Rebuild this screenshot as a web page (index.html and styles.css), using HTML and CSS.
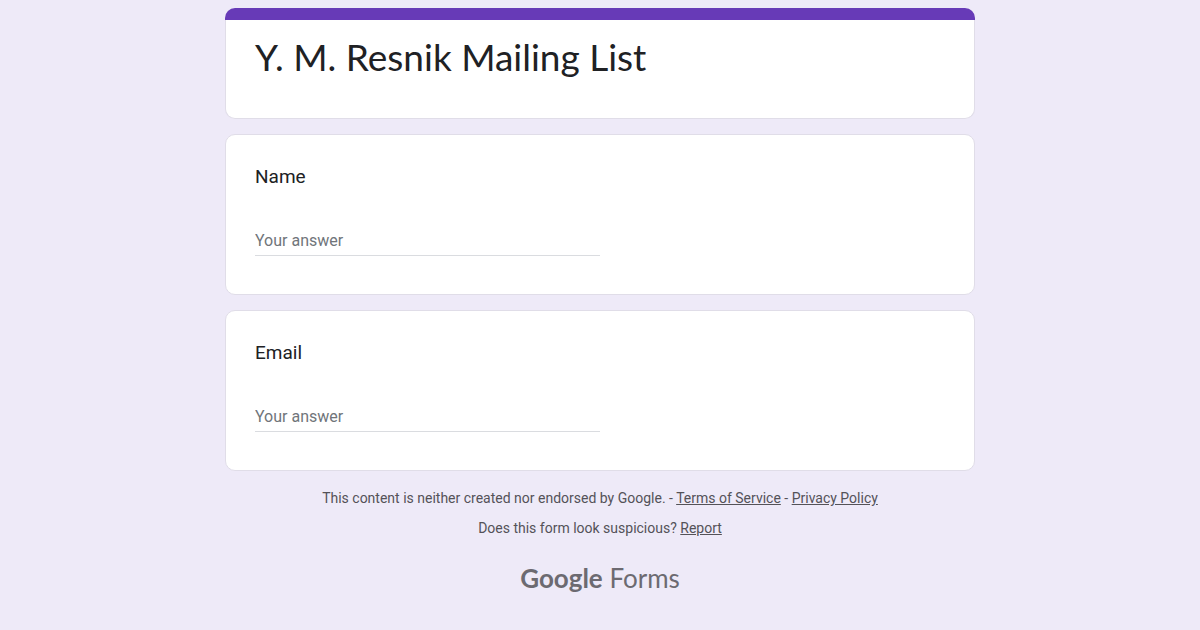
FILE: index.html
```
<!DOCTYPE html>
<html lang="en">
<head>
  <meta charset="UTF-8" />
  <meta name="viewport" content="width=device-width, initial-scale=1.0" />
  <title>Y. M. Resnik Mailing List</title>
  <link rel="stylesheet" href="styles.css">
</head>
<body>
  <main class="page">
    <form class="form">
      <!-- Form title -->
      <header class="card title-card">
        <h1>Y. M. Resnik Mailing List</h1>
      </header>

      <!-- Questions -->
      <div class="card question">
        <label for="name">Name</label>
        <input type="text" id="name" name="name" placeholder="Your answer">
      </div>
      <div class="card question">
        <label for="email">Email</label>
        <input type="text" id="email" name="email" placeholder="Your answer">
      </div>
    </form>

    <footer class="footer">
      <p>This content is neither created nor endorsed by Google. - <a href="#">Terms of Service</a> - <a href="#">Privacy Policy</a></p>
      <p>Does this form look suspicious? <a href="#">Report</a></p>
      <a class="logo" href="#"><span class="logo-brand">Google</span> <span>Forms</span></a>
    </footer>
  </main>
</body>
</html>
```

FILE: styles.css
```
* {
  box-sizing: border-box;
  margin: 0;
  padding: 0;
}
body {
  font-family: Roboto, Arial, sans-serif;
  background-color: #eeeaf8;
  color: #202124;
}
.page {
  max-width: 750px;
  margin: 0 auto;
  padding: 8px 0;
}
.form {
  display: flex;
  flex-direction: column;
  gap: 15px;
}
.card {
  background-color: #fff;
  border: 1px solid #e0dde8;
  border-radius: 10px;
  padding: 28px 29px;
}
/* Purple strip on top of the title card */
.title-card {
  border-width: 0 1px 1px;
  padding: 0 0 38px;
}
.title-card::before {
  content: "";
  display: block;
  height: 12px;
  margin: 0 -1px;
  border-radius: 10px 10px 0 0;
  background-color: #673ab7;
}
h1 {
  font-family: Lato, sans-serif;
  font-size: 37px;
  font-weight: 400;
  line-height: 46px;
  padding: 14px 29px 0;
}
.question {
  display: flex;
  flex-direction: column;
  gap: 35px;
  padding-bottom: 38px;
}
.question label {
  font-size: 19px;
  line-height: 28px;
}
.question input {
  width: 50%;
  height: 30px;
  border: none;
  border-bottom: 1px solid #dadce0;
  background: none;
  font: inherit;
  font-size: 16px;
}
.question input::placeholder {
  color: #70757a;
}
/* Footer */
.footer {
  display: flex;
  flex-direction: column;
  align-items: center;
  gap: 10px;
  padding-top: 17px;
  font-size: 14px;
  line-height: 20px;
  color: #545258;
}
.footer a {
  color: inherit;
}
.footer .logo {
  margin-top: 14px;
  font-family: Lato, sans-serif;
  font-size: 26px;
  line-height: 32px;
  color: #6c6a71;
  text-decoration: none;
}
.logo-brand {
  font-weight: 700;
}
```
